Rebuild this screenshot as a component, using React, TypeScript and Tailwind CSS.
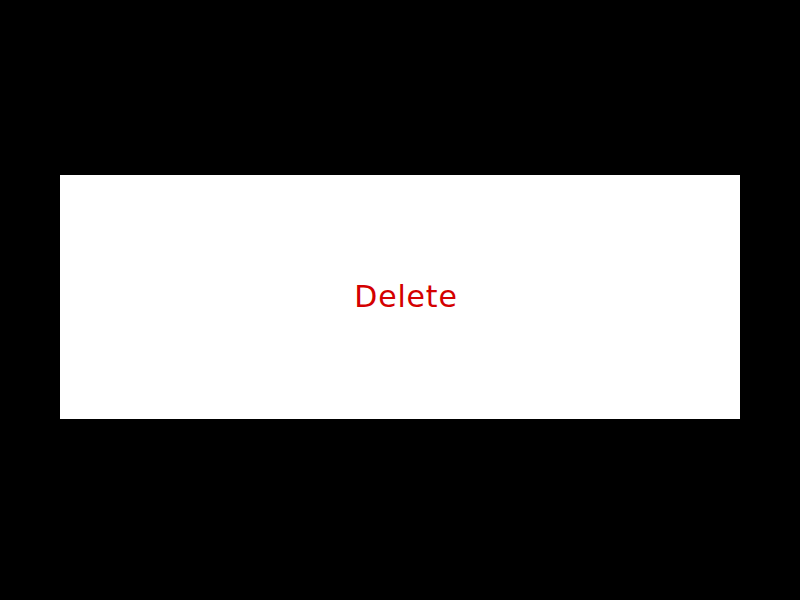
import React from "react";

export default function App() {
  return (
    <div className="w-[800px] h-[600px] bg-black pt-[175px] px-[60px]">
      <div className="h-[244px] bg-white flex items-center justify-center pl-[12px]">
        <button
          className="text-[30px] leading-none text-[#d40000] font-normal tracking-[0.8px]"
          style={{ fontFamily: '"DejaVu Sans", sans-serif' }}
        >
          Delete
        </button>
      </div>
    </div>
  );
}
